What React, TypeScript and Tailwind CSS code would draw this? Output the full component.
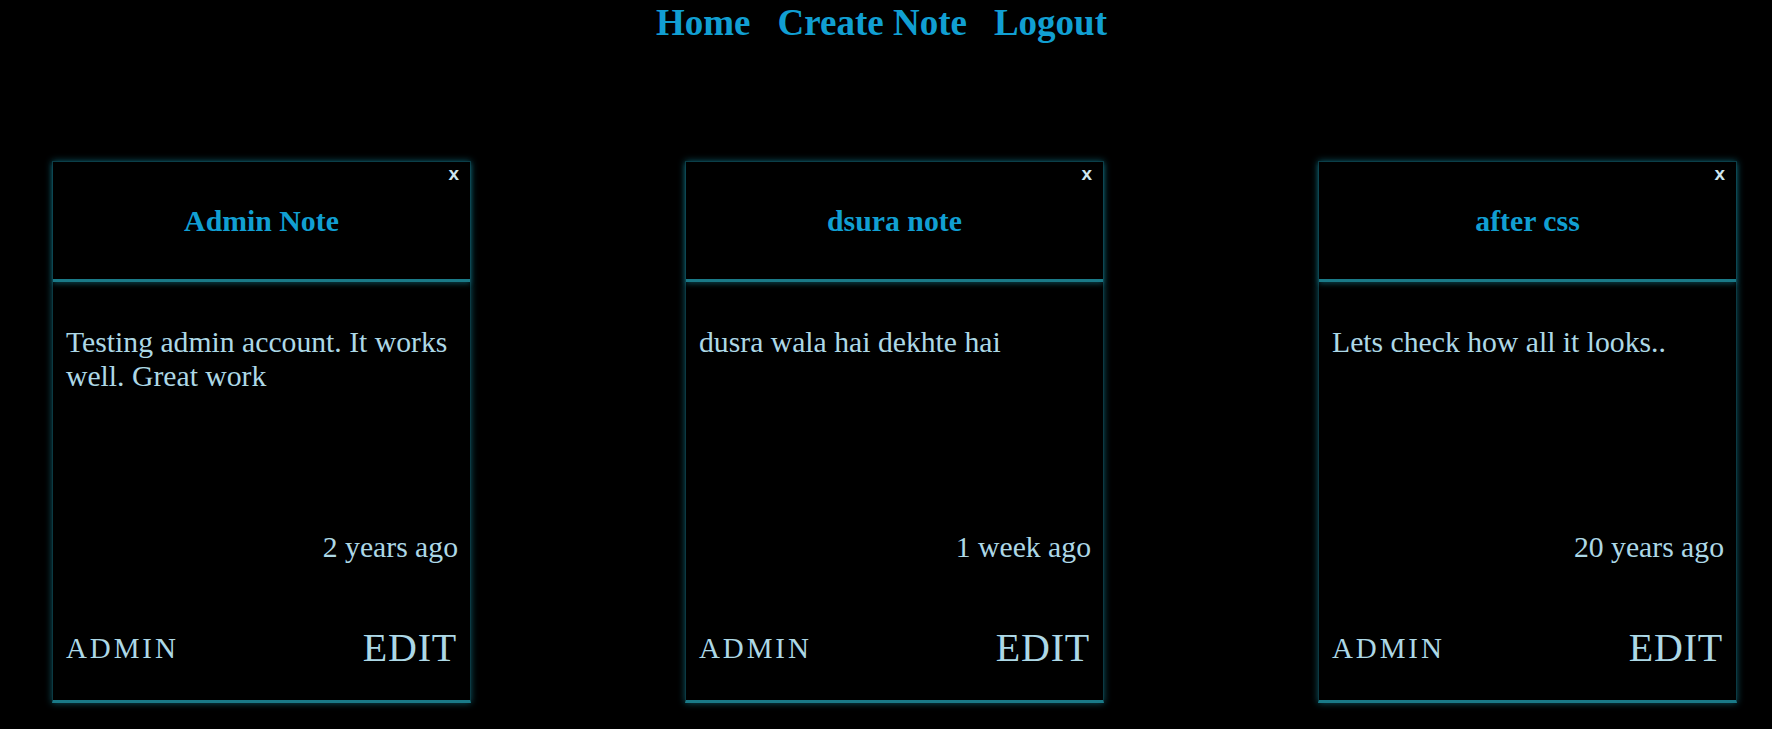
const notes = [
  { title: "Admin Note", body: "Testing admin account. It works well. Great work", when: "2 years ago" },
  { title: "dsura note", body: "dusra wala hai dekhte hai", when: "1 week ago" },
  { title: "after css", body: "Lets check how all it looks..", when: "20 years ago" },
];

function NoteCard({ title, body, when }: { title: string; body: string; when: string }) {
  return (
    <div className="relative flex h-[542px] w-[419px] flex-col border border-[#0b3a43] border-b-[3px] border-b-[#1a7a88] bg-black shadow-[0_0_7px_rgba(22,130,150,0.65)]">
      {/* delete */}
      <button className="absolute right-[11px] top-0 font-['Liberation_Sans',Arial,sans-serif] text-[19px] font-bold leading-[23px] text-[#cde6ef]">
        x
      </button>

      {/* Title */}
      <div className="flex h-[120px] shrink-0 items-center justify-center border-b-[3px] border-[#1a7a88] shadow-[0_2px_5px_rgba(22,130,150,0.45)]">
        <h2 className="text-[29.8px] font-bold leading-[34px] text-[#119fd2]">{title}</h2>
      </div>

      {/* Body */}
      <div className="h-[248px] shrink-0 pl-[13px] pr-[12px] pt-[43px]">
        <p className="text-[29.7px] leading-[34px] text-[#add8e6]">{body}</p>
      </div>

      <p className="pl-[13px] pr-[12px] text-right text-[29.7px] leading-[34px] text-[#add8e6]">{when}</p>

      {/* Footer */}
      <div className="mt-auto flex items-center justify-between pb-[29px] pl-[13px] pr-[13px]">
        <span className="text-[29px] leading-[33px] tracking-[0.1em] text-[#add8e6]">ADMIN</span>
        <span className="text-[40px] leading-[46px] tracking-[0.02em] text-[#add8e6]">EDIT</span>
      </div>
    </div>
  );
}

export default function App() {
  return (
    <div className="min-h-screen bg-black font-['Liberation_Serif','Times_New_Roman',serif]">
      <nav className="flex justify-center gap-[27px] pr-[9px] pt-[2px] text-[37px] font-bold leading-[42px] text-[#119fd2]">
        <a href="#">Home</a>
        <a href="#">Create Note</a>
        <a href="#">Logout</a>
      </nav>

      <main className="mt-[117px] flex gap-[214px] pl-[52px]">
        {notes.map((n) => (
          <NoteCard key={n.title} {...n} />
        ))}
      </main>
    </div>
  );
}
